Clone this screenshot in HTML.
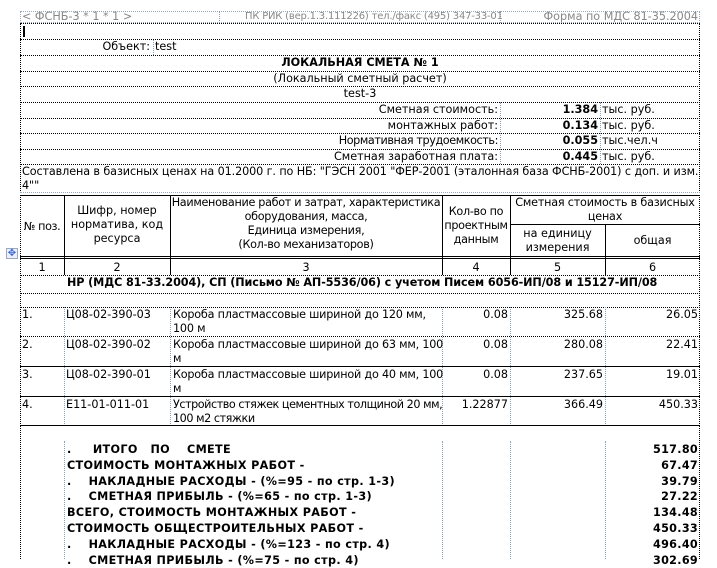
<!DOCTYPE html><html><head><meta charset="utf-8"><style>
*{margin:0;padding:0;box-sizing:border-box}
body{width:717px;height:559px;background:#fff;position:relative;overflow:hidden;font-family:"DejaVu Sans","Liberation Sans",sans-serif;font-size:11.2px;color:#000}
.a{position:absolute;white-space:nowrap;line-height:14px}
.r{text-align:right}.c{text-align:center}.b{font-weight:bold}
.hl{position:absolute;height:0;border-top:1px dotted #000}
.vl{position:absolute;width:0;border-left:1px dotted #000}
.gv{position:absolute;width:0;border-left:1px dotted #8aa0c0}
.sl{position:absolute;height:0;border-top:1px solid #000}
.sv{position:absolute;width:0;border-left:1px solid #000}
.g{color:#888}
</style></head><body>
<div style="position:absolute;left:20px;top:11px;width:680px;height:12px;border:1px dotted #9aa8c0"></div>
<div class="gv" style="left:219px;top:11px;height:12px"></div>
<div class="gv" style="left:500px;top:11px;height:12px"></div>
<div class="a g" style="left:22px;top:10px;line-height:13px">&lt; ФСНБ-3 * 1 * 1 &gt;</div>
<div class="a g" style="left:245px;top:10px;font-size:10px;line-height:13px;letter-spacing:-0.2px">ПК РИК (вер.1.3.111226) тел./факс (495) 347-33-01</div>
<div class="a g r" style="left:500px;width:198px;top:10px;line-height:13px">Форма по МДС 81-35.2004</div>
<div class="vl" style="left:20px;top:23px;height:170px"></div>
<div class="vl" style="left:699px;top:23px;height:170px"></div>
<div class="hl" style="left:20px;width:680px;top:23px"></div>
<div class="sv" style="left:23px;top:26px;height:11px;border-left-width:2px"></div>
<div class="hl" style="left:20px;width:680px;top:39px"></div>
<div class="a r" style="left:20px;width:130px;top:40px">Объект:</div>
<div class="gv" style="left:153px;top:40px;height:15px"></div>
<div class="a" style="left:155px;top:40px">test</div>
<div class="hl" style="left:20px;width:680px;top:55px"></div>
<div class="a c b" style="left:20px;width:680px;top:56px">ЛОКАЛЬНАЯ СМЕТА № 1</div>
<div class="hl" style="left:20px;width:680px;top:71px"></div>
<div class="a c" style="left:20px;width:680px;top:72px">(Локальный сметный расчет)</div>
<div class="hl" style="left:20px;width:680px;top:86px"></div>
<div class="a c" style="left:20px;width:680px;top:87px">test-3</div>
<div class="hl" style="left:20px;width:680px;top:102px"></div>
<div class="a r" style="left:200px;width:298px;top:103px">Сметная стоимость:</div>
<div class="a r b" style="left:500px;width:98px;top:103px">1.384</div>
<div class="a" style="left:602px;top:103px">тыс. руб.</div>
<div class="hl" style="left:20px;width:680px;top:118px"></div>
<div class="a r" style="left:200px;width:298px;top:119px">монтажных работ:</div>
<div class="a r b" style="left:500px;width:98px;top:119px">0.134</div>
<div class="a" style="left:602px;top:119px">тыс. руб.</div>
<div class="hl" style="left:20px;width:680px;top:133px"></div>
<div class="a r" style="left:200px;width:298px;top:134px;letter-spacing:-0.4px">Нормативная трудоемкость:</div>
<div class="a r b" style="left:500px;width:98px;top:134px">0.055</div>
<div class="a" style="left:602px;top:134px">тыс.чел.ч</div>
<div class="hl" style="left:20px;width:680px;top:149px"></div>
<div class="a r" style="left:200px;width:298px;top:150px">Сметная заработная плата:</div>
<div class="a r b" style="left:500px;width:98px;top:150px">0.445</div>
<div class="a" style="left:602px;top:150px">тыс. руб.</div>
<div class="gv" style="left:500px;top:102px;height:62px"></div>
<div class="gv" style="left:600px;top:102px;height:62px"></div>
<div class="hl" style="left:20px;width:680px;top:164px"></div>
<div class="a" style="left:22px;top:165px;line-height:14px;letter-spacing:-0.1px">Составлена в базисных ценах на 01.2000 г. по НБ: "ГЭСН 2001 "ФЕР-2001 (эталонная база ФСНБ-2001) с доп. и изм.<br>4""</div>
<div class="hl" style="left:20px;width:680px;top:192px;border-color:#9aa8c0"></div>
<div class="sl" style="left:20px;width:680px;top:195px"></div>
<div class="sv" style="left:20px;top:195px;height:231px;border-left-style:dotted"></div>
<div class="sv" style="left:699px;top:195px;height:231px;border-left-style:dotted"></div>
<div class="sv" style="left:64px;top:195px;height:80px"></div>
<div class="sv" style="left:170px;top:195px;height:80px"></div>
<div class="sv" style="left:442px;top:195px;height:80px"></div>
<div class="sv" style="left:510px;top:195px;height:80px"></div>
<div class="sv" style="left:605px;top:224px;height:51px"></div>
<div class="sl" style="left:510px;width:190px;top:224px"></div>
<div class="a c" style="left:20px;width:44px;top:220px;letter-spacing:-0.4px">№ поз.</div>
<div class="a c" style="left:64px;width:106px;top:204px;line-height:14px">Шифр, номер<br>норматива, код<br>ресурса</div>
<div class="a c" style="left:170px;width:272px;top:196px;line-height:14px;letter-spacing:-0.3px">Наименование работ и затрат, характеристика<br>оборудования, масса,<br>Единица измерения,<br>(Кол-во механизаторов)</div>
<div class="a c" style="left:442px;width:68px;top:205px;line-height:14px;letter-spacing:-0.3px">Кол-во по<br>проектным<br>данным</div>
<div class="a c" style="left:510px;width:190px;top:196px;line-height:14px;letter-spacing:-0.2px">Сметная стоимость в базисных<br>ценах</div>
<div class="a c" style="left:510px;width:95px;top:227px;line-height:14px">на единицу<br>измерения</div>
<div class="a c" style="left:605px;width:95px;top:234px">общая</div>
<div class="sl" style="left:20px;width:680px;top:256px"></div>
<div class="sl" style="left:20px;width:680px;top:258px"></div>
<div style="position:absolute;left:6px;top:248px;width:12px;height:11px;border:1px solid #9ab;background:#eef;color:#36c;font-size:10px;line-height:9px;text-align:center">✥</div>
<div class="a c" style="left:20px;width:44px;top:261px">1</div>
<div class="a c" style="left:64px;width:106px;top:261px">2</div>
<div class="a c" style="left:170px;width:272px;top:261px">3</div>
<div class="a c" style="left:442px;width:68px;top:261px">4</div>
<div class="a c" style="left:510px;width:95px;top:261px">5</div>
<div class="a c" style="left:605px;width:95px;top:261px">6</div>
<div class="hl" style="left:20px;width:680px;top:275px"></div>
<div class="a b" style="left:67px;top:276px;letter-spacing:-0.1px">НР (МДС 81-33.2004), СП (Письмо № АП-5536/06) с учетом Писем 6056-ИП/08 и 15127-ИП/08</div>
<div class="hl" style="left:20px;width:680px;top:293px"></div>
<div class="hl" style="left:20px;width:680px;top:307px"></div>
<div class="gv" style="left:64px;top:307px;height:119px"></div>
<div class="gv" style="left:170px;top:307px;height:119px"></div>
<div class="gv" style="left:442px;top:307px;height:119px"></div>
<div class="gv" style="left:510px;top:307px;height:119px"></div>
<div class="gv" style="left:605px;top:307px;height:119px"></div>
<div class="a" style="left:22px;top:308px">1.</div><div class="a" style="left:66px;top:308px">Ц08-02-390-03</div>
<div class="a" style="left:173px;top:308px;letter-spacing:-0.2px">Короба пластмассовые шириной до 120 мм,<br>100 м</div>
<div class="a r" style="left:442px;width:66px;top:308px">0.08</div><div class="a r" style="left:510px;width:93px;top:308px">325.68</div><div class="a r" style="left:605px;width:93px;top:308px">26.05</div>
<div class="hl" style="left:20px;width:680px;top:336px"></div>
<div class="a" style="left:22px;top:338px">2.</div><div class="a" style="left:66px;top:338px">Ц08-02-390-02</div>
<div class="a" style="left:173px;top:338px;letter-spacing:-0.2px">Короба пластмассовые шириной до 63 мм, 100<br>м</div>
<div class="a r" style="left:442px;width:66px;top:338px">0.08</div><div class="a r" style="left:510px;width:93px;top:338px">280.08</div><div class="a r" style="left:605px;width:93px;top:338px">22.41</div>
<div class="sl" style="left:20px;width:680px;top:366px"></div>
<div class="a" style="left:22px;top:368px">3.</div><div class="a" style="left:66px;top:368px">Ц08-02-390-01</div>
<div class="a" style="left:173px;top:368px;letter-spacing:-0.2px">Короба пластмассовые шириной до 40 мм, 100<br>м</div>
<div class="a r" style="left:442px;width:66px;top:368px">0.08</div><div class="a r" style="left:510px;width:93px;top:368px">237.65</div><div class="a r" style="left:605px;width:93px;top:368px">19.01</div>
<div class="sl" style="left:20px;width:680px;top:396px"></div>
<div class="a" style="left:22px;top:398px">4.</div><div class="a" style="left:66px;top:398px">Е11-01-011-01</div>
<div class="a" style="left:173px;top:398px;letter-spacing:-0.45px">Устройство стяжек цементных толщиной 20 мм,<br>100 м2 стяжки</div>
<div class="a r" style="left:442px;width:66px;top:398px">1.22877</div><div class="a r" style="left:510px;width:93px;top:398px">366.49</div><div class="a r" style="left:605px;width:93px;top:398px">450.33</div>
<div class="sl" style="left:20px;width:680px;top:425px"></div>
<div class="vl" style="left:20px;top:426px;height:133px"></div>
<div class="vl" style="left:699px;top:426px;height:133px"></div>
<div class="gv" style="left:64px;top:441px;height:118px"></div>
<div class="gv" style="left:442px;top:441px;height:118px"></div>
<div class="gv" style="left:510px;top:441px;height:118px"></div>
<div class="gv" style="left:605px;top:441px;height:118px"></div>
<div class="a b" style="left:67px;top:442px;line-height:15.8px;letter-spacing:0.35px">.&nbsp;&nbsp;&nbsp;&nbsp;&nbsp;ИТОГО&nbsp;&nbsp;&nbsp;ПО&nbsp;&nbsp;&nbsp;&nbsp;СМЕТЕ<br>СТОИМОСТЬ МОНТАЖНЫХ РАБОТ -<br>.&nbsp;&nbsp;&nbsp;&nbsp;НАКЛАДНЫЕ РАСХОДЫ - (%=95 - по стр. 1-3)<br>.&nbsp;&nbsp;&nbsp;&nbsp;СМЕТНАЯ ПРИБЫЛЬ - (%=65 - по стр. 1-3)<br>ВСЕГО, СТОИМОСТЬ МОНТАЖНЫХ РАБОТ -<br>СТОИМОСТЬ ОБЩЕСТРОИТЕЛЬНЫХ РАБОТ -<br>.&nbsp;&nbsp;&nbsp;&nbsp;НАКЛАДНЫЕ РАСХОДЫ - (%=123 - по стр. 4)<br>.&nbsp;&nbsp;&nbsp;&nbsp;СМЕТНАЯ ПРИБЫЛЬ - (%=75 - по стр. 4)</div>
<div class="a b r" style="left:605px;width:93px;top:442px;line-height:15.8px;letter-spacing:0.3px">517.80<br>67.47<br>39.79<br>27.22<br>134.48<br>450.33<br>496.40<br>302.69</div>
</body></html>
